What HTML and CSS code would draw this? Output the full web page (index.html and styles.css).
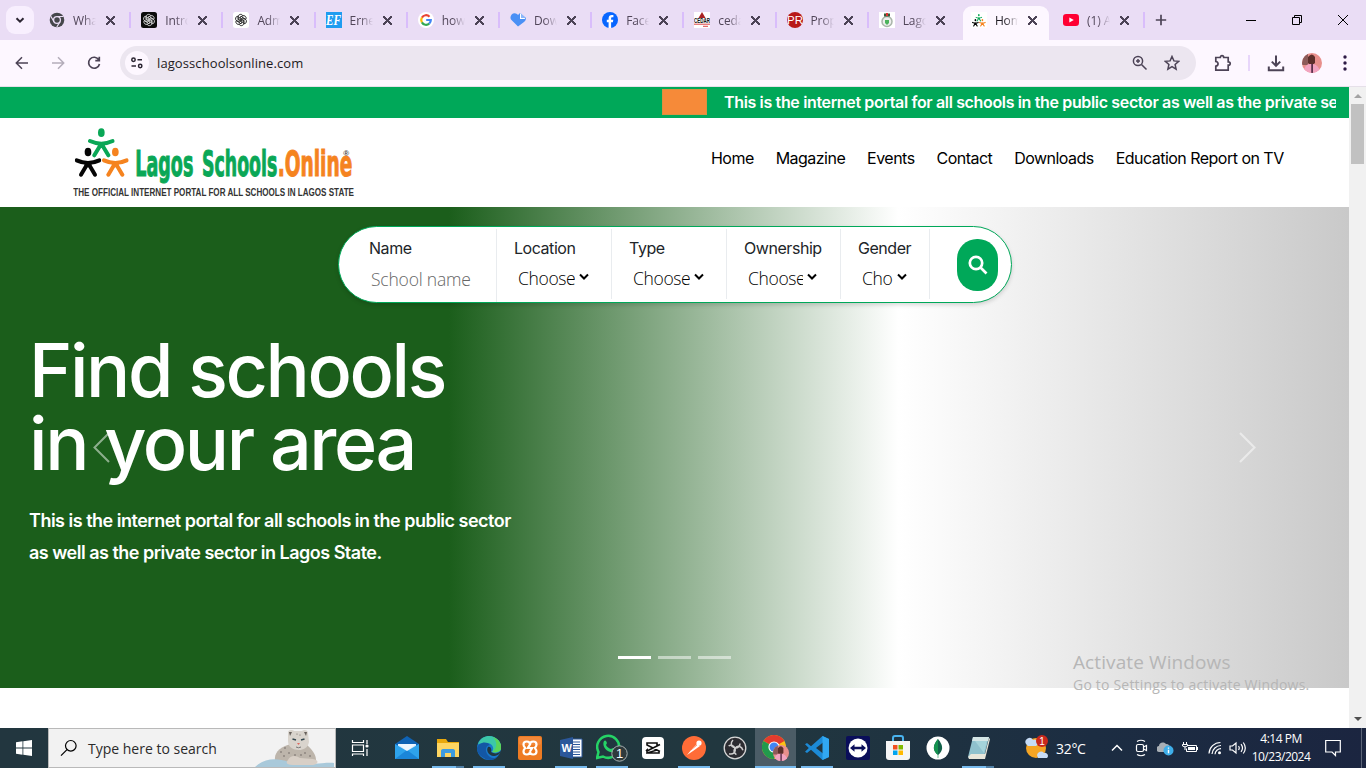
FILE: index.html
```
<!DOCTYPE html>
<html lang="en">
<head>
<meta charset="utf-8">
<title>Lagos Schools Online</title>
<link rel="stylesheet" href="styles.css">
</head>
<body>
<div class="tabstrip">
  <div class="tabsearch"><svg width="10" height="10" viewBox="0 0 10 10"><path d="M1.500 3.200 5 6.600 8.500 3.200" class="ln dark w2"/></svg></div>
  <div class="tabs">
    <div class="tab"><svg class="fav" viewBox="0 0 16 16"><circle cx="8" cy="8" r="7.300" fill="#45474b"/><circle cx="8" cy="8" r="3.400" fill="#45474b" stroke="#eaddf5" stroke-width="1.300"/><path d="M8 4.500H14.500M5 9.700 1.800 4.200M11 9.700 7.800 15" stroke="#eaddf5" stroke-width="1.200"/></svg><span class="tt">What</span><i class="x"></i></div>
    <div class="tab"><svg class="fav" viewBox="0 0 16 16"><rect width="16" height="16" rx="2.500" fill="#0b0b0b"/><use href="#knot" color="#d8d8d8"/></svg><span class="tt">Introd</span><i class="x"></i></div>
    <div class="tab"><svg class="fav" viewBox="0 0 16 16"><rect width="16" height="16" rx="2.500" fill="#fff"/><use href="#knot" color="#222"/></svg><span class="tt">Admi</span><i class="x"></i></div>
    <div class="tab"><svg class="fav" viewBox="0 0 16 16"><rect width="16" height="16" fill="#1f9cf0"/><text x="0" y="13" class="ef" textLength="15" lengthAdjust="spacingAndGlyphs">EF</text></svg><span class="tt">Ernes</span><i class="x"></i></div>
    <div class="tab"><svg class="fav" viewBox="0 0 16 16"><circle cx="8" cy="8" r="8" fill="#fff"/><g fill="none" stroke-width="2.200"><path d="M11.500 4.700A4.800 4.800 0 0 0 3.900 5.600" stroke="#ea4335"/><path d="M3.900 5.600a4.800 4.800 0 0 0 0 4.800" stroke="#fbbc05"/><path d="M3.900 10.400a4.800 4.800 0 0 0 7.300 1.200" stroke="#34a853"/><path d="M11.200 11.600A4.800 4.800 0 0 0 12.800 8H8.200" stroke="#4285f4"/></g></svg><span class="tt">how t</span><i class="x"></i></div>
    <div class="tab"><svg class="fav" viewBox="0 0 16 16"><path d="M8 14.500 1 7.500C-1 4 3-.5 7 2l1 1 2-2 6 5c0 2-1 3-2 4z" fill="#4a90f5"/><path d="M10 1v6h5.500z" fill="#fff"/><path d="M11 1.500 15.500 6H11z" fill="#8bb8fa"/></svg><span class="tt">Down</span><i class="x"></i></div>
    <div class="tab"><svg class="fav" viewBox="0 0 16 16"><circle cx="8" cy="8" r="8" fill="#0866ff"/><path d="M6.600 16V10.300H4.800V7.800h1.800V6.500c0-2.500 1.300-3.600 3.300-3.600.7 0 1.200.1 1.500.2v2.200h-1c-1 0-1.300.5-1.300 1.400v1.100h2.200l-.4 2.500H9.100V16z" fill="#fff"/></svg><span class="tt">Faceb</span><i class="x"></i></div>
    <div class="tab"><svg class="fav" viewBox="0 0 16 16"><rect width="16" height="16" fill="#fff"/><path d="m8 0 3.500 6h-7z" fill="#a22"/><text x="0" y="10.500" class="cedar" textLength="16" lengthAdjust="spacingAndGlyphs">CEDAR</text><path d="M0 12.200h16M9 14.300h5" stroke="#d44"/></svg><span class="tt">cedar</span><i class="x"></i></div>
    <div class="tab"><svg class="fav" viewBox="0 0 16 16"><circle cx="8" cy="8" r="8" fill="#b81919"/><text x="0" y="12" class="pr" textLength="16" lengthAdjust="spacingAndGlyphs">PR</text></svg><span class="tt">Prope</span><i class="x"></i></div>
    <div class="tab"><svg class="fav" viewBox="0 0 16 16"><rect width="16" height="16" fill="#fff"/><circle cx="8" cy="9.500" r="5" fill="#eee" stroke="#a9b5aa" stroke-width="1.500"/><path d="M5 1.500h6v3H5z" fill="#345b3b"/><path d="M7 1h2v3H7z" fill="#d33"/><path d="M6 8h4v3l-2 2-2-2z" fill="#4db35c"/></svg><span class="tt">Lagos</span><i class="x"></i></div>
    <div class="tab active"><svg class="fav" viewBox="0 0 16 16"><rect width="16" height="16" fill="#fff"/><use href="#people" x="1" y="2" width="14" height="13"/></svg><span class="tt">Home</span><i class="x"></i></div>
    <div class="tab"><svg class="fav" viewBox="0 0 16 16"><rect y="2" width="16" height="12" rx="3.200" fill="#ff0033"/><path d="M6.300 5.400v5.200L10.800 8z" fill="#fff"/></svg><span class="tt">(1) Al</span><i class="x"></i></div>
  </div>
  <svg class="plus" width="12" height="12" viewBox="0 0 12 12"><path d="M6 .8v10.400M.8 6h10.400" class="ln grey w17"/></svg>
  <div class="winctl">
    <svg width="12" height="12" viewBox="0 0 12 12"><path d="M1 6.500h10" class="ln blk"/></svg>
    <svg width="12" height="12" viewBox="0 0 12 12"><path d="M1.500 3.500h7v7h-7zM3.500 3.500v-2h7v7h-2" class="ln blk"/></svg>
    <svg width="12" height="12" viewBox="0 0 12 12"><path d="m1 1 10 10M11 1 1 11" class="ln blk"/></svg>
  </div>
</div>
<div class="toolbar">
  <div class="navbtns">
    <svg width="14" height="14" viewBox="0 0 14 14"><path d="M13 7H1.500M7 1.300 1.300 7 7 12.700" class="ln grey w15"/></svg>
    <svg width="14" height="14" viewBox="0 0 14 14"><path d="M1 7h11.500M7 1.300 12.700 7 7 12.700" class="ln light w15"/></svg>
    <svg width="14" height="14" viewBox="0 0 14 14"><path d="M11.800 3.800A5.500 5.500 0 1 0 12.500 8M12.300.8v3.900H8.300" class="ln grey w17"/></svg>
  </div>
  <div class="omnibox">
    <div class="site"><svg width="14" height="14" viewBox="0 0 14 14"><g class="ln dark w15"><circle cx="3.500" cy="3.800" r="1.700"/><path d="M7.500 3.800H12M1.500 10H6"/><circle cx="10.200" cy="10" r="1.700"/></g></svg></div>
    <span class="url">lagosschoolsonline.com</span>
    <svg width="16" height="16" viewBox="0 0 16 16"><g class="ln grey w15"><circle cx="6" cy="6" r="4.600"/><path d="m9.500 9.500 5 5M6 4v4M4 6h4"/></g></svg>
    <svg width="16" height="16" viewBox="0 0 16 16"><path d="m8 1.500 1.900 4.400 4.800.4-3.600 3.200 1 4.700L8 11.700l-4.100 2.500 1-4.700L1.300 6.300l4.800-.4z" class="ln grey w15"/></svg>
  </div>
  <svg class="ext" width="18" height="18" viewBox="0 0 18 18"><path d="M1.800 3.500h4.500c0-2.500 3.400-2.500 3.400 0h4.500v4.300c2.700 0 2.700 3.400 0 3.400v5H1.800v-4c3-.4 3-4.400 0-4.700z" class="ln grey w17"/></svg>
  <i class="tsep"></i>
  <svg class="dl" width="18" height="18" viewBox="0 0 18 18"><path d="M9 1.500v10M4.800 7.600 9 11.800l4.200-4.200M1.800 12.500v3.700h14.400v-3.700" class="ln grey w2"/></svg>
  <svg class="ava" width="20" height="20" viewBox="0 0 20 20"><use href="#avatar"/></svg>
  <svg class="dots" width="4" height="16" viewBox="0 0 4 16"><g fill="#2d1a45"><circle cx="2" cy="2" r="1.700"/><circle cx="2" cy="8" r="1.700"/><circle cx="2" cy="14" r="1.700"/></g></svg>
</div>

<div class="view">
  <div class="page">
    <div class="ticker"><i class="flag"></i><div class="tickclip">This is the internet portal for all schools in the public sector as well as the private sector</div></div>
    <header class="header">
      <svg class="logo" width="284" height="72" viewBox="69 27 852 216">
        <use href="#people" x="74" y="30" width="164" height="150"/>
        <text x="256" y="174" class="lg green" textLength="174" lengthAdjust="spacingAndGlyphs">Lagos</text>
        <text x="456" y="174" class="lg green" textLength="226" lengthAdjust="spacingAndGlyphs">Schools</text>
        <text x="683" y="174" class="lg orange" textLength="224" lengthAdjust="spacingAndGlyphs">.Online</text>
        <text x="880" y="115" class="reg">®</text>
        <text x="70" y="234" class="tag" textLength="842" lengthAdjust="spacingAndGlyphs">THE OFFICIAL INTERNET PORTAL FOR ALL SCHOOLS IN LAGOS STATE</text>
      </svg>
      <nav class="nav"><a>Home</a><a>Magazine</a><a>Events</a><a>Contact</a><a>Downloads</a><a>Education Report on TV</a></nav>
    </header>
    <section class="hero">
      <div class="search">
        <div class="f f1"><label>Name</label><div class="ph">School name</div></div>
        <div class="f f2"><label>Location</label><div class="sel"><span class="cut">Choose</span><svg width="10" height="8" viewBox="0 0 10 8"><path d="m1 1.500 4 4 4-4" class="ln blk w2"/></svg></div></div>
        <div class="f f3"><label>Type</label><div class="sel"><span class="cut">Choose</span><svg width="10" height="8" viewBox="0 0 10 8"><path d="m1 1.500 4 4 4-4" class="ln blk w2"/></svg></div></div>
        <div class="f f4"><label>Ownership</label><div class="sel"><span class="cut">Choose</span><svg width="10" height="8" viewBox="0 0 10 8"><path d="m1 1.500 4 4 4-4" class="ln blk w2"/></svg></div></div>
        <div class="f f5"><label>Gender</label><div class="sel"><span class="cut">Choose</span><svg width="10" height="8" viewBox="0 0 10 8"><path d="m1 1.500 4 4 4-4" class="ln blk w2"/></svg></div></div>
        <div class="go"><svg width="20" height="20" viewBox="0 0 20 20" fill="none" stroke="#fff" stroke-width="2.700"><circle cx="8" cy="8" r="6.200"/><path d="m12.500 12.500 6 6"/></svg></div>
      </div>
      <h1>Find schools<br>in your area</h1>
      <p class="lead">This is the internet portal for all schools in the public sector<br>as well as the private sector in Lagos State.</p>
      <svg class="arrow left" width="32" height="32" viewBox="0 0 32 32"><path d="M24 2 9.500 16.500 24 31" /></svg>
      <svg class="arrow right" width="32" height="32" viewBox="0 0 32 32"><path d="m8 2 14.500 14.500L8 31"/></svg>
      <div class="bars"><i class="on"></i><i></i><i></i></div>
    </section>
  </div>
  <div class="scroll"><i class="up"></i><i class="thumb"></i><i class="down"></i></div>
  <div class="mark"><div class="m1">Activate Windows</div><div class="m2">Go to Settings to activate Windows.</div></div>
</div>

<div class="taskbar">
  <div class="start"><svg width="16" height="16" viewBox="0 0 16 16" fill="#fff"><path d="M0 2.200 6.500 1.300V7.600H0zM7.300 1.200 16 0v7.600H7.300zM0 8.400h6.500v6.300L0 13.800zM7.300 8.400H16V16l-8.700-1.200z"/></svg></div>
  <div class="tsearch">
    <svg class="mag" width="18" height="18" viewBox="0 0 18 18"><g class="ln blk w12"><circle cx="10.800" cy="6.800" r="5.300"/><path d="M7 10.600 1 16.700"/></g></svg>
    <span>Type here to search</span>
    <svg class="cat" width="80" height="38" viewBox="0 0 80 38">
      <path d="M20 31c-1-8 6-14 17-16l14 0c6 5 10 11 10 16l-3 5-18 1-18-5z" fill="#bdb5ab"/>
      <path d="M0 38C8 30 20 28 34 33s34 0 45 1v4z" fill="#a9c9da"/>
      <path d="M33 4c0-4 5-3 6-2h8c2-2 6-1 6 2l1 9c-1 6-6 8-10 8-6 0-11-3-11-9z" fill="#d9d4cd"/>
      <path d="m34 3 3 0-2 4zM52 3l-3 0 2 4z" fill="#68615c"/>
      <path d="m37.500 10 3.500 1M49.500 10l-3.500 1" stroke="#354850" stroke-width="1.500"/><path d="M42 14h3l-1.500 2z" fill="#e06a60"/><path d="M41 18q2.500 1.500 5 0" stroke="#777" fill="none"/>
      <path d="M33 31c2-5 8-5 12-2l13 1c6 1 6 5 0 6H38c-6 0-8-2-5-5z" fill="#d8cfc6"/>
      <g fill="#6e6862"><circle cx="26" cy="23" r=".8"/><circle cx="30" cy="19" r=".8"/><circle cx="29" cy="27" r=".8"/><circle cx="34" cy="24" r=".8"/><circle cx="50" cy="24" r=".8"/><circle cx="55" cy="27" r=".8"/><circle cx="42" cy="5" r=".6"/><circle cx="45" cy="6" r=".6"/><circle cx="40" cy="26" r=".8"/><circle cx="46" cy="26" r=".8"/></g>
    </svg>
  </div>
  <div class="apps">
    <div class="app tv"><svg width="18" height="18" viewBox="0 0 18 18" fill="none" stroke="#fff" stroke-width="1.200"><path d="M1.500 1v2.500h11V1M1.500 6h11v6.500h-11zM1.500 17v-2h11v2M16 1v4M16 10v7"/><circle cx="16" cy="7" r="1" fill="#fff"/></svg></div>
    <div class="app"><svg width="24" height="24" viewBox="0 0 24 24"><path d="M0 8 12 0l12 8v4H0z" fill="#0f63b5"/><path d="M3 8h18v8H3z" fill="#cfeaff"/><path d="M0 8v15h24V8L12 15z" fill="#2ea3ec"/><path d="m0 23 12-9 12 9z" fill="#1b86d8"/><path d="M3 8h18l-9 7z" fill="#eef7ff"/></svg></div>
    <div class="app run more"><svg width="22" height="20" viewBox="0 0 22 20"><path d="M0 1h9l2 3h11v15H0z" fill="#e8a80c"/><path d="M0 5h22v14H0z" fill="#fdd562"/><path d="M4 19v-6c0-1 .5-2 2-2h10c1.500 0 2 1 2 2v6h-4v-4H8v4z" fill="#3c9be0"/></svg></div>
    <div class="app run"><svg width="24" height="24" viewBox="0 0 24 24"><circle cx="12" cy="12" r="12" fill="#1878cc"/><path d="M1 8C4 0 12-1 17 1c6 3 8 8 7 12-1 3-5 4-9 3 3-4 0-9-5-9-4 0-8 1-9 1z" fill="#3cc7a8"/><path d="M16 1c6 2 9 7 8 12-1 3-5 4-9 3 6-4 5-11 1-15z" fill="#5bd45a"/><path d="M0 12C1 7 9 4 13 9c-5 0-6 8 0 12 3 2 6 1 8-1-4 6-12 4-14 2C3 20 0 17 0 12z" fill="#1357a5"/><path d="M11 11c3-1 4 3 3 5 3 2 7 2 10-1-1 3-4 5-8 5-5-1-7-6-5-9z" fill="#213740"/></svg></div>
    <div class="app"><svg width="24" height="24" viewBox="0 0 24 24"><rect width="24" height="24" rx="2" fill="#ee7b23"/><rect x="1" y="1" width="22" height="8" rx="2" fill="#f3883a"/><path d="M12 8.500C12 4.500 5.500 4.500 5.500 8.500c0 2.500 1.500 2.500 1.500 3.500s-1.500 1-1.500 3.500c0 4 6.500 4 6.500 0 0 4 6.500 4 6.500 0 0-2.500-1.500-2.500-1.500-3.500s1.500-1 1.500-3.500c0-4-6.500-4-6.500 0l-2.200 3.500h4.400L12 15.500" fill="none" stroke="#fff" stroke-width="2.200"/></svg></div>
    <div class="app run"><svg width="24" height="22" viewBox="0 0 24 22"><path d="M12 2h11v18H12z" fill="#fff" stroke="#2b579a"/><path d="M14 5h7M14 7.500h7M14 10h7M14 12.500h7M14 15h7M14 17.500h7" stroke="#2b579a"/><path d="m1 3 13-3v22L1 19z" fill="#2b579a"/><text x="2.500" y="15" class="wd">W</text></svg></div>
    <div class="app run"><svg width="32" height="28" viewBox="0 0 32 28"><path d="m1 24 1.500-6A11 11 0 1 1 7 22.500z" fill="none" stroke="#25d366" stroke-width="2.500"/><path d="M8 7c1-1 2-1 3 2l-1 2c1 2 3 3.500 5 4l2-1c3 1 3 2 1 4-5 2-13-5-10-11z" fill="#25d366"/><circle cx="23.500" cy="19.500" r="7.700" fill="#2f3a3c" stroke="#a8b0b2"/><text x="23.500" y="24.300" class="bdg">1</text></svg></div>
    <div class="app"><svg width="22" height="22" viewBox="0 0 22 22"><rect width="22" height="22" rx="4" fill="#fff"/><path d="M18 7.500 15 9V6H5v2l12 6v2H5v-3l-1 1M18 14.500 15 13l-10 3v-2l12-6" fill="none" stroke="#111" stroke-width="1.600"/></svg></div>
    <div class="app run"><svg width="24" height="24" viewBox="0 0 24 24"><circle cx="12" cy="12" r="12" fill="#ff6c37"/><path d="m5 19 5-6 5-5 3 2-7 5z" fill="#fff"/><circle cx="17" cy="7" r="2.600" fill="#fff"/><path d="m9 14 6-5" stroke="#ff6c37" stroke-width=".7"/></svg></div>
    <div class="app"><svg width="24" height="24" viewBox="0 0 24 24"><circle cx="12" cy="12" r="10.800" fill="#2c2c31" stroke="#d7d7d7" stroke-width="1.300"/><g fill="none" stroke="#cfcfcf" stroke-width="1.500"><path d="M10 4c-3 3-2 7 1.500 7.800 3.500.5 5.500-1.500 5.500-4.300"/><path d="M10 4c-3 3-2 7 1.500 7.800 3.500.5 5.500-1.500 5.500-4.300" transform="rotate(120 12 12)"/><path d="M10 4c-3 3-2 7 1.500 7.800 3.500.5 5.500-1.500 5.500-4.300" transform="rotate(240 12 12)"/></g></svg></div>
    <div class="app run full"><svg width="27" height="26" viewBox="0 0 27 26"><circle cx="12" cy="12" r="12" fill="#fbc116"/><path d="M12 12 1.600 6A12 12 0 0 1 22.400 6z" fill="#e33b2e"/><path d="M12 12 1.600 6A12 12 0 0 0 12 24l5-9z" fill="#229a4c"/><circle cx="12" cy="12" r="5.600" fill="#fff"/><circle cx="12" cy="12" r="4.500" fill="#4285f4"/><use href="#avatar" x="11" y="10" width="16" height="16"/></svg></div>
    <div class="app run"><svg width="24" height="24" viewBox="0 0 24 24"><path d="M17.500 0 24 3v18l-6.500 3L6 13.800 2 17l-2-1.200L3.800 12 0 8.200 2 7l4 3.200zM18 6.500 11 12l7 5.500z" fill="#1c8ad6" fill-rule="evenodd"/><path d="M17.500 0 24 3v18l-6.500 3z" fill="#31a8f2"/></svg></div>
    <div class="app"><svg width="24" height="24" viewBox="0 0 24 24"><rect width="24" height="24" rx="2" fill="#0a0e5a"/><circle cx="12" cy="12" r="9.500" fill="#fff"/><path d="m4 12 4.500-3.800v2.600h7V8.200L20 12l-4.500 3.800v-2.600h-7v2.600z" fill="#0a0e5a"/></svg></div>
    <div class="app"><svg width="24" height="26" viewBox="0 0 24 26"><path d="M7 7V3q0-2 2-2h6q2 0 2 2v4" fill="none" stroke="#49b3ee" stroke-width="2"/><path d="M0 6h24v16q0 3-3 3H3q-3 0-3-3z" fill="#f5f5f5"/><path d="M7 10h4.500v4.500H7z" fill="#f25022"/><path d="M12.500 10H17v4.500h-4.500z" fill="#7fba00"/><path d="M7 15.500h4.500V20H7z" fill="#00a4ef"/><path d="M12.500 15.500H17V20h-4.500z" fill="#ffb900"/></svg></div>
    <div class="app"><svg width="24" height="24" viewBox="0 0 24 24"><circle cx="12" cy="12" r="11.500" fill="#fff"/><path d="M12 3c6 7 5 12 0 16-5-4-6-9 0-16z" fill="#116149"/><path d="M12 3c-6 7-5 12 0 16zM11.700 18h.6v4h-.6z" fill="#15924f"/></svg></div>
    <div class="app run more"><svg width="24" height="24" viewBox="0 0 24 24"><path d="M7 1h16l-5 20H2z" fill="#8fc1cd"/><path d="M7 1h16l-1 4H6z" fill="#d5e6e6"/><path d="m2 21 3-3h14l4-16 1 1-5 20H3z" fill="#e8e6da"/><path d="m9 5 12 0-3 12z" fill="#a5d3da"/></svg></div>
  </div>
  <div class="tray">
    <svg class="wx" width="26" height="26" viewBox="0 0 26 26"><circle cx="12" cy="13" r="10" fill="#f5a524"/><path d="M2 9a4 4 0 0 1 7-4 3 3 0 0 1 3 6H4zM13 20a4 4 0 0 1 7-2 3 3 0 0 1 3 5H14z" fill="#c7dcf6"/><circle cx="18" cy="6" r="6" fill="#c9281c"/><text x="18" y="10" class="bdg sm">1</text></svg>
    <span class="temp">32°C</span>
    <svg class="t1" width="12" height="8" viewBox="0 0 12 8"><path d="m1 6.500 5-5 5 5" class="ln wht w15"/></svg>
    <svg class="t2" width="13" height="18" viewBox="0 0 13 18"><g class="ln wht w12"><rect x="1.500" y="5.500" width="7" height="7" rx="1.500"/><path d="m8.500 8 3-1.500v5L8.500 10M2 2.500q4-2.500 8 0M2 15.500q4 2.500 8 0"/></g></svg>
    <svg class="t3" width="17" height="16" viewBox="0 0 17 16"><path d="M3 12a3 3 0 0 1-1-6c0-3 4-5 7-2 3 0 4 2 4 4l-3 4z" fill="#a9afb5"/><circle cx="11.500" cy="10.500" r="5" fill="#3eaee9"/><path d="M11.500 7.500v1.200M11.500 9.800v3.500" stroke="#fff" stroke-width="1.400"/></svg>
    <svg class="t4" width="17" height="14" viewBox="0 0 17 14"><path d="M5.500 4.500h9v6h-10v-3M15.500 6v3" class="ln wht"/><path d="M6 6h7v3H6z" fill="#fff"/><path d="M1.500 1v2.500M4.500 1v2.500M.5 3.500h5v1.500q-2.500 2-5 0zM3 5.500V9" class="ln wht"/></svg>
    <svg class="t5" width="14" height="14" viewBox="0 0 14 14"><g class="ln wht w12"><path d="M1 12.500A11.500 11.500 0 0 1 12.500 1.500M4 13a9 9 0 0 1 9-8.500M7 13.200a6 6 0 0 1 6-5.500"/></g><circle cx="11.500" cy="11.800" r="1.500" fill="#fff"/></svg>
    <svg class="t6" width="18" height="14" viewBox="0 0 18 14"><path d="M1 5v4h2.500L7 12V2L3.500 5zM9.500 5q1.500 2 0 4M12 3.200q3 3.800 0 7.600M14.300 1.500q4 5.500 0 11" class="ln wht w12"/></svg>
    <div class="clock"><span>4:14 PM</span><span>10/23/2024</span></div>
    <svg class="t7" width="16" height="18" viewBox="0 0 16 18"><path d="M.7 1.500h14.600v11.500h-4.800v3.500L7 13H.7z" class="ln wht w12"/></svg>
    <i class="peek"></i>
  </div>
</div>

<svg class="defs" width="0" height="0">
  <symbol id="knot" viewBox="0 0 16 16"><g fill="none" stroke="currentColor" stroke-width=".85"><path id="petal" d="M5.200 8.500V4.800a2.500 2.500 0 0 1 4.700-1.200L7.100 5.200v3.700"/><use href="#petal" transform="rotate(60 8 8)"/><use href="#petal" transform="rotate(120 8 8)"/><use href="#petal" transform="rotate(180 8 8)"/><use href="#petal" transform="rotate(240 8 8)"/><use href="#petal" transform="rotate(300 8 8)"/></g></symbol>
  <symbol id="person" viewBox="0 0 80 90"><ellipse cx="40" cy="14" rx="10" ry="13"/><path d="M6 39q34 16 68 0M38 50 19 82M42 50 61 82" fill="none" stroke="currentColor" stroke-width="12" stroke-linecap="round"/><path d="M28 42h24l-3 18H31z"/></symbol>
  <symbol id="people" viewBox="0 0 164 150" preserveAspectRatio="none"><use href="#person" x="40" y="0" width="80" height="90" color="#0aa756" fill="#0aa756"/><use href="#person" x="0" y="58" width="80" height="90" color="#050505" fill="#050505"/><use href="#person" x="82" y="58" width="80" height="90" color="#f5831f" fill="#f5831f"/></symbol>
  <symbol id="avatar" viewBox="0 0 20 20"><clipPath id="av"><circle cx="10" cy="10" r="10"/></clipPath><g clip-path="url(#av)"><path d="M0 0h20v20H0z" fill="#e88f8c"/><path d="M0 0h6v12H0z" fill="#8c5a58"/><path d="M6 4q4-5 7 0v6q-4 4-7 0z" fill="#5c2f2b"/><path d="M1 20q2-10 8-9 7-1 10 9z" fill="#f2a3c0"/><path d="M9.300 11h1.600v9H9.300z" fill="#4a2440"/></g></symbol>
</svg>
</body>
</html>
```
FILE: styles.css
```
* { box-sizing: border-box; }
body { margin: 0; width: 1366px; height: 768px; overflow: hidden; background: #fff; font-family: "Open Sans", "Noto Sans", sans-serif; display: flex; flex-direction: column; }
svg { display: block; flex: none; }
i { display: block; }
.defs { position: absolute; }
.ln { fill: none; stroke-width: 1; }
.dark { stroke: #2b2532; } .grey { stroke: #4c4356; } .light { stroke: #b4adba; } .blk { stroke: #000; } .wht { stroke: #fff; }
.w12 { stroke-width: 1.2; } .w15 { stroke-width: 1.5; } .w17 { stroke-width: 1.7; } .w2 { stroke-width: 2; }

.tabstrip { height: 40px; flex: none; background: #eaddf5; display: flex; align-items: center; padding-left: 6px; }
.tabsearch { width: 28px; height: 28px; border-radius: 9px; background: #f8effe; display: grid; place-items: center; margin-right: 4px; }
.tabs { display: flex; height: 40px; }
.tab { width: 92.2px; position: relative; display: flex; align-items: center; padding-left: 11px; }
.tab::after { content: ""; position: absolute; right: -1px; top: 12px; width: 2px; height: 16px; background: #d9bdfb; }
.tab.active::after, .tab:nth-child(10)::after { display: none; }
.tab.active::before { content: ""; position: absolute; left: 3px; top: 6px; width: 86px; height: 34px; background: #fdf7ff; border-radius: 9px 9px 0 0; }
.fav { width: 16px; height: 16px; position: relative; }
.tt { position: relative; width: 23px; margin-left: 8px; overflow: hidden; white-space: nowrap; font-size: 12px; letter-spacing: -.1px; color: #514659; -webkit-mask-image: linear-gradient(90deg, #000 45%, transparent); mask-image: linear-gradient(90deg, #000 45%, transparent); }
.active .tt { color: #1e1a22; }
.x { position: relative; width: 9px; height: 9px; margin-left: 10px; background: linear-gradient(45deg, transparent 42%, #4c4356 43%, #4c4356 57%, transparent 58%), linear-gradient(-45deg, transparent 42%, #4c4356 43%, #4c4356 57%, transparent 58%); }
.plus { margin-left: 11px; }
.winctl { display: flex; gap: 34px; margin-left: 78px; }
.ef { font: italic bold 14px "Liberation Serif", serif; fill: #fff; }
.cedar { font: bold 7px "Liberation Sans", sans-serif; fill: #111; }
.pr { font: 11px "Liberation Sans", sans-serif; fill: #fff; }

.toolbar { height: 47px; flex: none; background: #fdf7ff; border-bottom: 1px solid #e6e0e9; display: flex; align-items: center; padding-left: 15px; }
.navbtns { display: flex; gap: 22px; width: 105px; }
.omnibox { width: 1076px; height: 34px; border-radius: 17px; background: #ece6f0; display: flex; align-items: center; padding: 0 16px 0 5px; gap: 16px; }
.site { width: 24px; height: 24px; border-radius: 50%; background: #fdf7ff; display: grid; place-items: center; }
.url { flex: 1; font-size: 13px; letter-spacing: .1px; color: #1e1a22; margin-left: -8px; }
.ext { margin-left: 18px; }
.tsep { width: 2px; height: 16px; background: #e8d6fb; margin-left: 16px; }
.dl { margin-left: 17px; } .ava { margin-left: 17px; } .dots { margin-left: 21px; }

.view { flex: none; height: 641px; display: flex; position: relative; }
.page { width: 1349px; background: #fff; }
.ticker { height: 31px; background: #00a859; display: flex; align-items: flex-start; padding: 2px 0 0 662px; }
.flag { width: 45px; height: 26px; background: #f68a39; border: 1px solid #d99240; }
.tickclip { margin-left: 17px; width: 612px; overflow: hidden; white-space: nowrap; color: #fff; font: 600 16px/27px Inter, sans-serif; letter-spacing: -.35px; }
.header { height: 89px; display: flex; align-items: flex-start; padding: 9px 0 0 73px; }
.lg { font: bold 104px "DejaVu Sans Condensed", "DejaVu Sans", sans-serif; stroke-width: 3; }
.green { fill: #0aa756; stroke: #0aa756; } .orange { fill: #f5831f; stroke: #f5831f; }
.reg { font: bold 24px "Liberation Sans", sans-serif; fill: #444; }
.tag { font: bold 31px "Liberation Sans", sans-serif; fill: #333; }
.nav { margin: 19px 0 0 354px; display: flex; gap: 21.9px; font: 400 16px/24px Inter, sans-serif; letter-spacing: -.52px; color: #000; white-space: nowrap; }

.hero { height: 481px; position: relative; padding-top: 19px; background: linear-gradient(90deg, #1b5e1b 33.3%, #fff 66.6%, #c9c9c9); }
.search { width: 674px; height: 77px; margin-left: 338px; border: 1px solid #00a859; border-radius: 39px; background: #fff; box-shadow: 0 2px 4px rgba(0,0,0,.15); display: flex; align-items: flex-start; padding: 2px 0 0 12px; }
.f { height: 70px; border-right: 1px solid #e9ecef; padding: 7px 0 0 17px; color: #212529; }
.f1 { width: 146px; height: 73px; padding-left: 18px; } .f2, .f3 { width: 115px; } .f4 { width: 114px; } .f5 { width: 89px; }
.f label { display: table; font: 400 16px/24px Inter, sans-serif; letter-spacing: -.45px; }
.ph, .sel { font-weight: 300; font-size: 17.5px; line-height: 30px; margin: 4px 0 0 2px; color: #666; letter-spacing: -.2px; }
.sel { margin: 3px 0 0 4px; display: flex; color: #000; letter-spacing: -.35px; }
.cut { width: 57px; overflow: hidden; }
.f4 .cut { width: 55px; } .f5 .cut { width: 31px; }
.sel svg { margin: 10px 0 0 4px; }
.go { width: 41px; height: 52px; margin: 10px 0 0 27px; border-radius: 20px; background: #00a859; display: grid; place-items: center; }
.hero h1 { margin: 31px 0 0 29px; color: #fff; font: 500 73.6px/73px Inter, sans-serif; letter-spacing: -2.4px; white-space: nowrap; }
.lead { margin: 25px 0 0 29px; color: #fff; font: 600 18px/32px Inter, sans-serif; letter-spacing: -.5px; white-space: nowrap; }
.arrow { position: absolute; top: 224px; fill: none; stroke: #fff; stroke-width: 2; opacity: .5; }
.left { left: 85px; } .right { left: 1232px; }
.bars { position: absolute; left: 618px; top: 449px; display: flex; gap: 7px; }
.bars i { width: 33px; height: 3px; background: rgba(255,255,255,.5); }
.bars .on { background: #fff; }
.scroll { width: 17px; background: #f1f1f1; display: flex; flex-direction: column; align-items: center; }
.up { margin-top: 7px; border: 4px solid transparent; border-top: 0; border-bottom: 4px solid #a3a3a3; }
.thumb { width: 13px; height: 60px; background: #c1c1c1; margin-top: 6px; }
.down { margin-top: auto; margin-bottom: 7px; border: 4px solid transparent; border-bottom: 0; border-top: 4px solid #505050; }
.mark { position: absolute; left: 1073px; top: 561px; color: #b6b6b6; white-space: nowrap; }
.m1 { font-size: 19px; line-height: 28px; letter-spacing: .1px; } .m2 { font-size: 14px; line-height: 18px; letter-spacing: .2px; }

.taskbar { height: 40px; flex: none; display: flex; background: linear-gradient(90deg, #22363f, #21373f 55%, #1c2d42 80%, #1b2540); color: #fff; }
.start { width: 48px; display: grid; place-items: center; }
.tsearch { width: 288px; background: #f2f2f2; border: 1px solid #b9b9b9; position: relative; display: flex; align-items: center; padding-left: 11px; gap: 10px; font-size: 14px; color: #2b2b2b; }
.cat { position: absolute; right: 0; bottom: 0; }
.apps { display: grid; grid-template-columns: 50px repeat(12, 41px) 40px 40px 40px; width: 662px; }
.app { display: grid; place-items: center; position: relative; }
.tv { padding-right: 3px; }
.run::after { content: ""; position: absolute; bottom: 0; left: calc(50% - 16px); width: 32px; height: 2px; background: #76b9ed; }
.more::after { background: linear-gradient(90deg, #76b9ed 74%, #507fa5 74%); }
.full { background: #4b5c66; } .full::after { left: 0; width: 41px; }
.wd { font: bold 11px "Liberation Sans", sans-serif; fill: #fff; }
.bdg { font: 13px "Liberation Sans", sans-serif; fill: #fff; text-anchor: middle; }
.sm { font-size: 10px; }
.tray { flex: 1; display: flex; align-items: center; font-size: 12px; }
.wx { margin-left: 26px; } .temp { width: 55px; margin-left: 6px; font-size: 14px; letter-spacing: -.3px; }
.t2 { margin-left: 12px; } .t3 { margin-left: 9px; } .t4 { margin-left: 8px; } .t5 { margin-left: 9px; } .t6 { margin-left: 7px; }
.clock { width: 64px; margin-left: 2px; display: flex; flex-direction: column; align-items: center; line-height: 18px; letter-spacing: -.5px; }
.t7 { margin-left: 12px; }
.peek { width: 1px; height: 40px; background: #5b6477; margin-left: 20px; }
```
